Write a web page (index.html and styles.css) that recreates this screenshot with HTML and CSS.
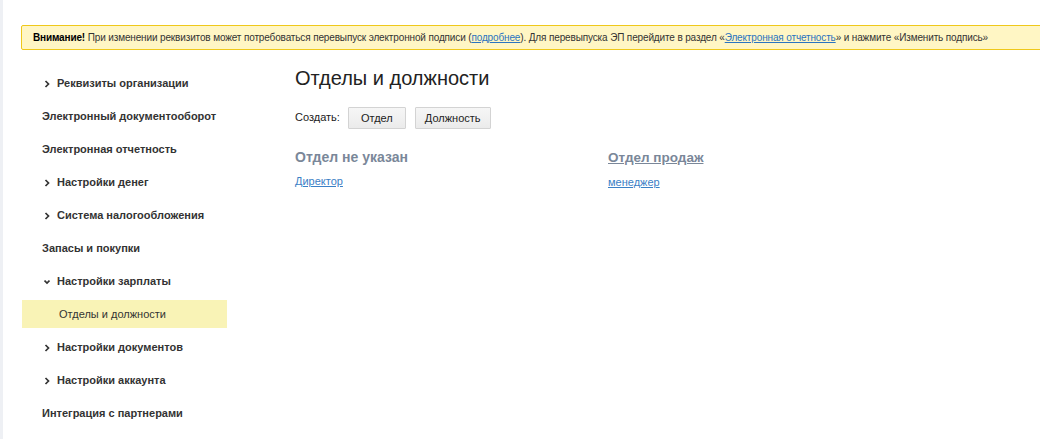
FILE: index.html
```html
<!DOCTYPE html>
<html lang="ru">
<head>
    <meta charset="UTF-8">
    <title>Отделы и должности</title>
    <link rel="stylesheet" href="styles.css">
</head>
<body>
<div class="page">
    <div class="notice">
        <b>Внимание!</b> При изменении реквизитов может потребоваться перевыпуск электронной подписи (<a href="#">подробнее</a>). Для перевыпуска ЭП перейдите в раздел «<a href="#">Электронная отчетность</a>» и нажмите «Изменить подпись»
    </div>

    <div class="layout">
        <ul class="side-menu">
            <li class="has-sub"><svg class="chev" viewBox="0 0 6 8"><polyline points="1.5,1 4.5,4 1.5,7"/></svg>Реквизиты организации</li>
            <li>Электронный документооборот</li>
            <li>Электронная отчетность</li>
            <li class="has-sub"><svg class="chev" viewBox="0 0 6 8"><polyline points="1.5,1 4.5,4 1.5,7"/></svg>Настройки денег</li>
            <li class="has-sub"><svg class="chev" viewBox="0 0 6 8"><polyline points="1.5,1 4.5,4 1.5,7"/></svg>Система налогообложения</li>
            <li>Запасы и покупки</li>
            <li class="has-sub"><svg class="chev" viewBox="0 0 6 8"><polyline points="0.5,2.5 3,5 5.5,2.5"/></svg>Настройки зарплаты</li>
            <li class="sub active">Отделы и должности</li>
            <li class="has-sub"><svg class="chev" viewBox="0 0 6 8"><polyline points="1.5,1 4.5,4 1.5,7"/></svg>Настройки документов</li>
            <li class="has-sub"><svg class="chev" viewBox="0 0 6 8"><polyline points="1.5,1 4.5,4 1.5,7"/></svg>Настройки аккаунта</li>
            <li>Интеграция с партнерами</li>
        </ul>

        <div class="content">
            <h1>Отделы и должности</h1>
            <div class="create-row">
                <span>Создать:</span>
                <button>Отдел</button>
                <button>Должность</button>
            </div>
            <div class="departments">
                <div class="dept">
                    <h3>Отдел не указан</h3>
                    <a href="#">Директор</a>
                </div>
                <div class="dept">
                    <h3><a href="#">Отдел продаж</a></h3>
                    <a href="#">менеджер</a>
                </div>
            </div>
        </div>
    </div>
</div>
</body>
</html>
```

FILE: styles.css
```css
body {
    margin: 0; padding: 0; background: #fff; color: #333;
    font-family: "Liberation Sans", Arial, sans-serif;
}
.page {
    border-left: 3px solid #eef0f4; min-height: 439px; box-sizing: border-box; overflow: hidden;
}

/* warning strip */
.notice {
    margin: 25px -20px 0 18px; height: 25px; line-height: 23px; box-sizing: border-box;
    padding: 0 11px; background: #fff6c4; border: 1px solid #efc81a; border-radius: 2px;
    font-size: 10px; letter-spacing: -0.14px; color: #333; white-space: nowrap;
}
.notice b { color: #000; }
.notice a { color: #2a74c0; }

.layout { display: flex; margin-top: 19px; }

/* left menu */
.side-menu {
    list-style: none; margin: 0 0 0 19px; padding: 0; width: 205px;
    display: flex; flex-direction: column; gap: 5px;
}
.side-menu li {
    height: 28px; line-height: 29px; padding-left: 20px;
    font-size: 11px; font-weight: bold; color: #333; white-space: nowrap;
}
.side-menu .chev {
    width: 6px; height: 8px; margin: 0 7px 0 2px; vertical-align: -1px;
    fill: none; stroke: #333; stroke-width: 1.7;
}
.side-menu .sub { padding-left: 37px; font-weight: normal; }
.side-menu .active { background: #f9f3b6; }

/* main */
.content { margin-left: 68px; flex: 1; }
.content h1 {
    margin: -3px 0 0; font-size: 20px; font-weight: normal; color: #222; line-height: 24px;
}
.create-row { display: flex; align-items: center; margin-top: 17px; font-size: 11px; color: #222; }
.create-row span { margin-right: 8px; margin-top: -3px; }
.create-row button {
    height: 22px; min-width: 58px; padding: 0 9px; margin-right: 9px;
    font-family: inherit; font-size: 11px; color: #222;
    background: linear-gradient(#f6f6f6, #ebebeb); border: 1px solid #d3d3d3; border-radius: 1px;
}

.departments { display: flex; margin-top: 19px; }
.dept { width: 313px; }
.dept h3 { margin: 0 0 5px; font-size: 14px; font-weight: bold; color: #7a8799; line-height: 18px; }
.dept h3 a { color: #7a8799; font-size: 13.5px; }
.dept > a { font-size: 11px; color: #3b80c6; }
```
